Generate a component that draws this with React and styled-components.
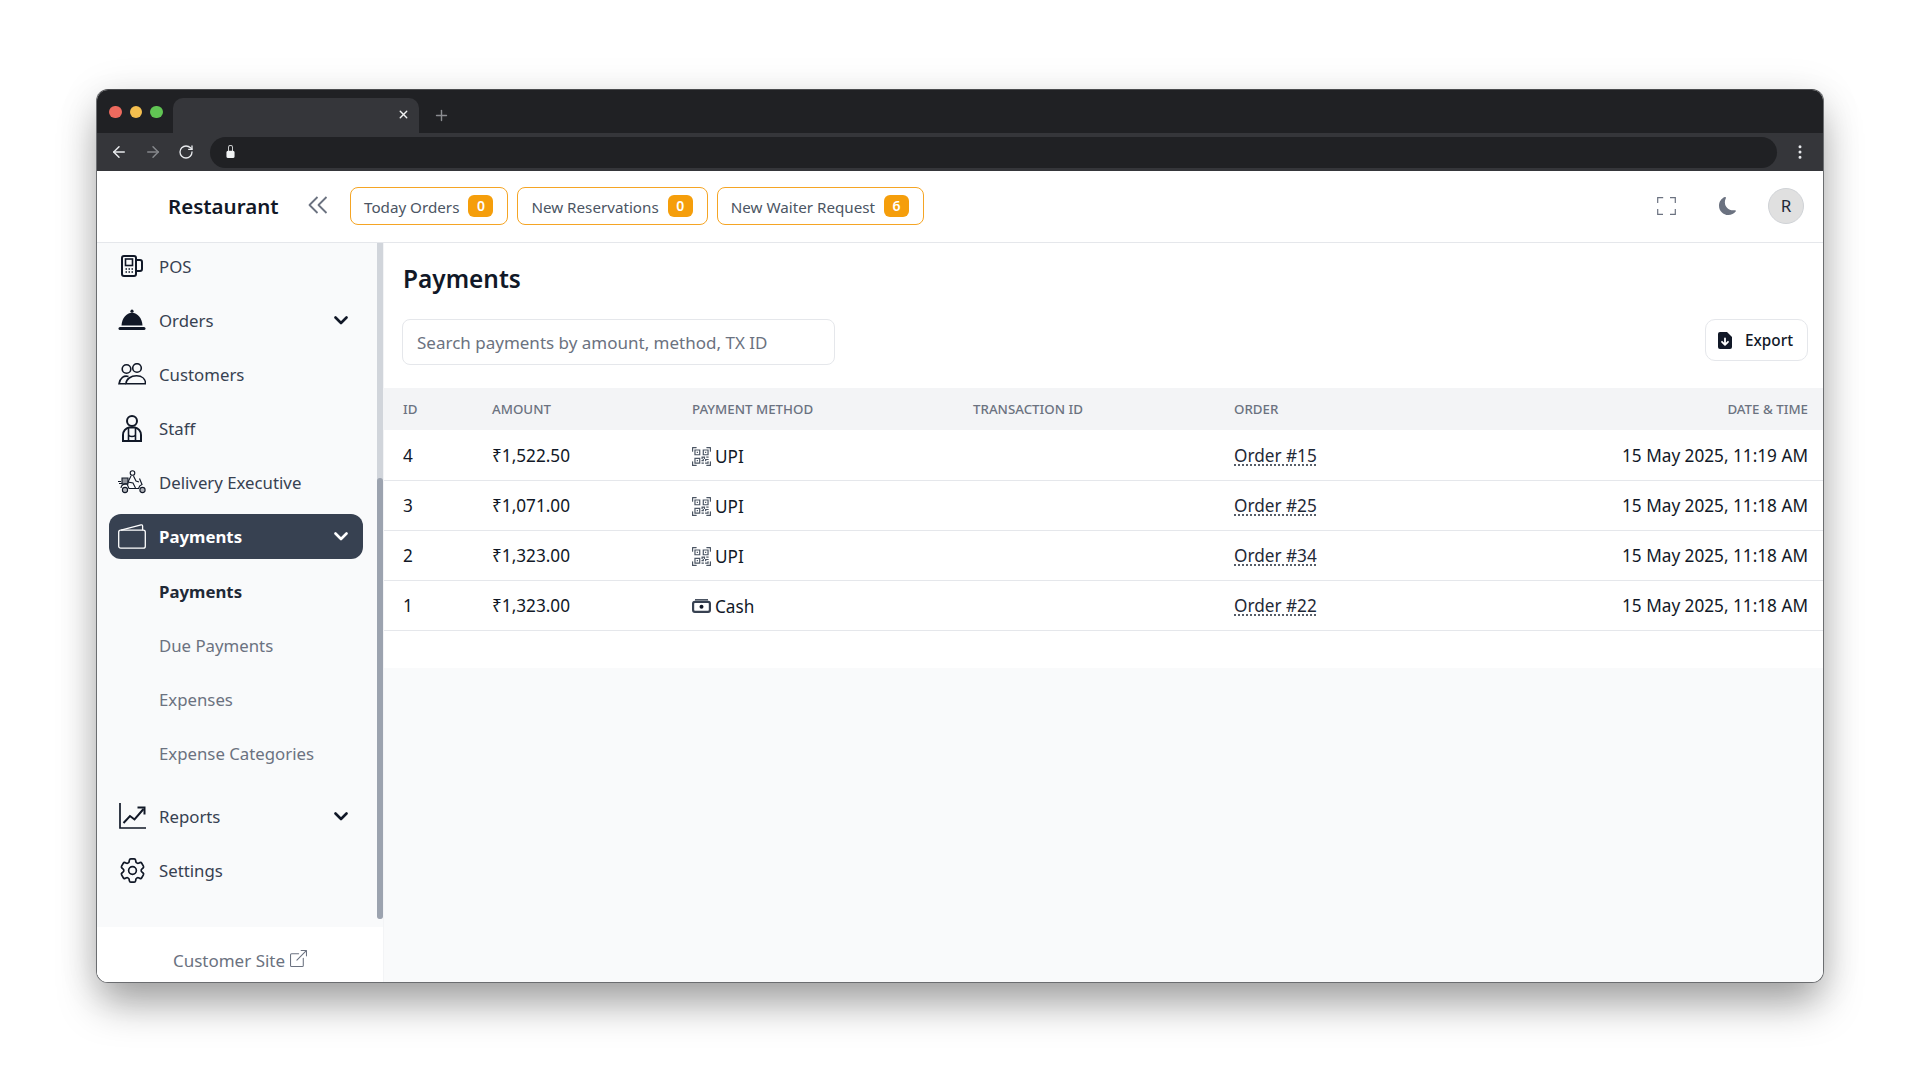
import styled, {createGlobalStyle} from "styled-components"
import {ArrowLeft, ArrowRight, RotateCw, X, Plus, EllipsisVertical} from "lucide-react"
import {BsQrCodeScan, BsMoonFill, BsBoxArrowUpRight, BsLockFill} from "react-icons/bs"
import {HiOutlineCog6Tooth} from "react-icons/hi2"

const FONT = `"Noto Sans", "Open Sans", sans-serif`

const GlobalStyle = createGlobalStyle`
  html, body {
    margin: 0;
    background: #fff;
  }
  body {
    font-family: ${FONT};
    color: #111827;
    overflow: hidden;
  }
  * {
    box-sizing: border-box;
  }
`

const PosIcon = () => (
  <svg width="22" height="22" viewBox="0 0 22 22" fill="none" stroke="currentColor" strokeWidth="2">
    <rect x="1" y="1" width="14" height="20" rx="2" />
    <rect x="4.500" y="4" width="7" height="6.500" strokeWidth="1.600" />
    <path d="M4.500 14h1.500M7.500 14H9M10.500 14H12M4.500 17H6M7.500 17H9M10.500 17H12" strokeWidth="1.600" />
    <path d="M15 5h4a2 2 0 0 1 2 2v7a2 2 0 0 1-2 2h-4" />
  </svg>
)

const BellIcon = () => (
  <svg width="28" height="22" viewBox="0 0 28 22" fill="currentColor">
    <circle cx="14" cy="2.200" r="1.600" />
    <path d="M3.500 16.500C3.800 9.500 8.500 3.800 14 3.800s10.200 5.700 10.500 12.700z" />
    <rect x="0.500" y="18" width="27" height="3" rx="1.500" />
  </svg>
)

const CustomersIcon = () => (
  <svg width="28" height="22" viewBox="0 0 28 22" fill="none" stroke="currentColor" strokeWidth="1.600">
    <circle cx="8.500" cy="6" r="4.300" />
    <circle cx="19" cy="5" r="4.300" />
    <path d="M10.500 13.500C6 12 2 15 1 20.800h6.800" />
    <path d="M8 20.800c0-4.800 5-8 10.500-8s9 3.200 9 8z" />
  </svg>
)

const StaffIcon = () => (
  <svg width="20" height="27" viewBox="0 0 20 27" fill="none" stroke="currentColor" strokeWidth="2">
    <circle cx="10" cy="6" r="5" />
    <path d="M1 26v-6c0-4 3-7 6-7.500h6c3 .5 6 3.500 6 7.500v6z" />
    <path d="M6.500 13v6.500c0 1.500 1 2 3.500 2s3.500-.5 3.500-2V13M6.500 20v6M13.500 20v6" strokeWidth="1.600" />
  </svg>
)

const DeliveryIcon = () => (
  <svg width="28" height="24" viewBox="0 0 28 24" fill="none" stroke="currentColor" strokeWidth="1.100">
    <circle cx="14.500" cy="3" r="2.300" />
    <path d="M13 6l-3 6 5 1 2.500 5M15.500 6l2.500 5 3 1" />
    <path d="M4 8h6v6H4z" fill="currentColor" fillOpacity=".45" />
    <path d="M1 13.500h3M0 11.500h3" />
    <path d="M3 18c0-3 3-4.500 6-4l2 4.500h9.500c.5-2 1.800-3.500 3.500-4l-2.500-6" />
    <circle cx="7" cy="20" r="2.600" fill="currentColor" fillOpacity=".3" />
    <circle cx="24.500" cy="20" r="2.600" fill="currentColor" fillOpacity=".3" />
  </svg>
)

const WalletIcon = () => (
  <svg width="28" height="25" viewBox="0 0 28 25" fill="none" stroke="currentColor" strokeWidth="1.300">
    <rect x="0.700" y="6.200" width="26.600" height="18" rx="2" />
    <path d="M3 6.200 23 .9c1-.2 1.600.3 1.600 1.300v4" />
  </svg>
)

const ChartIcon = () => (
  <svg width="27" height="26" viewBox="0 0 27 26" fill="none" stroke="currentColor" strokeWidth="1.700">
    <path d="M1 0v25h26" />
    <path d="M4.500 20 11 13l4.500 3.500L24.500 6" strokeWidth="2" />
    <path d="M18.500 4.500h7v7" strokeWidth="2" />
  </svg>
)

const CashIcon = () => (
  <svg width="19" height="14" viewBox="0 0 19 14" fill="none" stroke="#374151">
    <path d="M3 .8h13" strokeWidth="1.400" />
    <rect x="1.100" y="2.800" width="16.800" height="10" rx="1.800" strokeWidth="2.200" />
    <circle cx="9.500" cy="7.800" r="2" fill="#111827" strokeWidth="0" />
  </svg>
)

const FileDownIcon = () => (
  <svg width="14" height="17" viewBox="0 0 14 17">
    <path d="M2 0h7l5 5v10a2 2 0 0 1-2 2H2a2 2 0 0 1-2-2V2a2 2 0 0 1 2-2z" fill="#111827" />
    <path d="M7 6.500v6M4 9.800l3 3 3-3" fill="none" stroke="#fff" strokeWidth="1.800" strokeLinecap="round" strokeLinejoin="round" />
  </svg>
)

const FullscreenIcon = () => (
  <svg width="19" height="18" viewBox="0 0 19 18" fill="none" stroke="currentColor" strokeWidth="1.200">
    <path d="M.7 6V.7h5.500M13 .7h5.300V6M18.300 12v5.300H13M6 17.300H.7V12" />
  </svg>
)

const Chevron = () => (
  <svg width="14" height="9" viewBox="0 0 14 9" fill="none" stroke="currentColor" strokeWidth="2.600" strokeLinecap="round" strokeLinejoin="round">
    <path d="M1.500 1.500 7 7l5.500-5.500" />
  </svg>
)

const CollapseIcon = () => (
  <svg width="20" height="18" viewBox="0 0 20 18" fill="none" stroke="currentColor" strokeWidth="1.800" strokeLinejoin="round">
    <path d="M9.500 1 1.500 9l8 8M18.500 1l-8 8 8 8" />
  </svg>
)

const NAV_TOP = [
  {label: "POS", icon: <PosIcon />},
  {label: "Orders", icon: <BellIcon />, caret: true},
  {label: "Customers", icon: <CustomersIcon />},
  {label: "Staff", icon: <StaffIcon />},
  {label: "Delivery Executive", icon: <DeliveryIcon />},
]

const SUB_ITEMS = ["Payments", "Due Payments", "Expenses", "Expense Categories"]

const NAV_BOTTOM = [
  {label: "Reports", icon: <ChartIcon />, caret: true},
  {label: "Settings", icon: <HiOutlineCog6Tooth size={31} strokeWidth={1.3} />},
]

const STATS = [
  {label: "Today Orders", count: 0},
  {label: "New Reservations", count: 0},
  {label: "New Waiter Request", count: 6},
]

const PAYMENTS = [
  {id: 4, amount: "₹1,522.50", method: "UPI", order: "Order #15", date: "15 May 2025, 11:19 AM"},
  {id: 3, amount: "₹1,071.00", method: "UPI", order: "Order #25", date: "15 May 2025, 11:18 AM"},
  {id: 2, amount: "₹1,323.00", method: "UPI", order: "Order #34", date: "15 May 2025, 11:18 AM"},
  {id: 1, amount: "₹1,323.00", method: "Cash", order: "Order #22", date: "15 May 2025, 11:18 AM"},
]

function NavItem({item}) {
  return (
    <NavRow>
      <NavIcon>{item.icon}</NavIcon>
      <NavLabel>{item.label}</NavLabel>
      {item.caret && <Chevron />}
    </NavRow>
  )
}

function App() {
  return (
    <Page>
      <GlobalStyle />
      <BrowserWindow>
        <TabStrip>
          <Lights>
            <Light $color="#ed6a5e" />
            <Light $color="#f4bf4f" />
            <Light $color="#61c554" />
          </Lights>
          <Tab>
            <X size={13} strokeWidth={2.500} />
          </Tab>
          <NewTab>
            <Plus size={17} strokeWidth={2} />
          </NewTab>
        </TabStrip>
        <UrlBar>
          <UrlIcon><ArrowLeft size={18} /></UrlIcon>
          <UrlIcon $muted><ArrowRight size={18} /></UrlIcon>
          <UrlIcon><RotateCw size={16} /></UrlIcon>
          <Address>
            <BsLockFill size={13} />
          </Address>
          <Kebab>
            <EllipsisVertical size={18} />
          </Kebab>
        </UrlBar>

        <Header>
          <Brand>Restaurant</Brand>
          <CollapseButton>
            <CollapseIcon />
          </CollapseButton>
          <Stats>
            {STATS.map((s) => (
              <StatButton key={s.label}>
                <StatLabel>{s.label}</StatLabel>
                <Badge>{s.count}</Badge>
              </StatButton>
            ))}
          </Stats>
          <HeaderRight>
            <HeaderIcon $gap={43}>
              <FullscreenIcon />
            </HeaderIcon>
            <HeaderIcon $gap={31}>
              <BsMoonFill size={18} />
            </HeaderIcon>
            <Avatar>R</Avatar>
          </HeaderRight>
        </Header>

        <Body>
          <Sidebar>
            <SideScroll>
              <NavList>
                {NAV_TOP.map((item) => (
                  <NavItem key={item.label} item={item} />
                ))}
                <NavActive>
                  <NavIcon><WalletIcon /></NavIcon>
                  <NavLabel>Payments</NavLabel>
                  <Chevron />
                </NavActive>
                <SubList>
                  {SUB_ITEMS.map((label, i) => (
                    <SubItem key={label} $active={i === 0}>{label}</SubItem>
                  ))}
                </SubList>
                {NAV_BOTTOM.map((item) => (
                  <NavItem key={item.label} item={item} />
                ))}
              </NavList>
              <ScrollTrack>
                <ScrollThumb />
              </ScrollTrack>
            </SideScroll>
            <SideFooter>
              Customer Site
              <BsBoxArrowUpRight size={17} />
            </SideFooter>
          </Sidebar>

          <Main>
            <Top>
              <Title>Payments</Title>
              <Toolbar>
                <Search placeholder="Search payments by amount, method, TX ID" />
                <ExportButton>
                  <FileDownIcon />
                  Export
                </ExportButton>
              </Toolbar>
            </Top>
            <TableWrap>
              <Table>
                <thead>
                  <tr>
                    <Th $width={89}>ID</Th>
                    <Th $width={200}>Amount</Th>
                    <Th $width={281}>Payment Method</Th>
                    <Th $width={261}>Transaction ID</Th>
                    <Th>Order</Th>
                    <Th $right>Date &amp; Time</Th>
                  </tr>
                </thead>
                <tbody>
                  {PAYMENTS.map((p) => (
                    <tr key={p.id}>
                      <Td>{p.id}</Td>
                      <Td>{p.amount}</Td>
                      <Td>
                        <Method>
                          {p.method === "UPI" ? <BsQrCodeScan size={19} color="#4b5563" /> : <CashIcon />}
                          {p.method}
                        </Method>
                      </Td>
                      <Td />
                      <Td>
                        <OrderLink>{p.order}</OrderLink>
                      </Td>
                      <Td $right>{p.date}</Td>
                    </tr>
                  ))}
                </tbody>
              </Table>
            </TableWrap>
          </Main>
        </Body>
      </BrowserWindow>
    </Page>
  )
}

export default App

const Page = styled.div`
  width: 1920px;
  height: 1080px;
  padding: 89px 96px 0;
`

const BrowserWindow = styled.div`
  width: 1728px;
  height: 894px;
  display: flex;
  flex-direction: column;
  border: 1px solid #6b6d70;
  border-top-color: #4a4b4e;
  border-radius: 12px;
  overflow: hidden;
  background: #fff;
  box-shadow: 0 24px 40px -4px rgba(0, 0, 0, 0.34), 0 4px 40px rgba(0, 0, 0, 0.1);
`

const TabStrip = styled.div`
  height: 43px;
  flex: none;
  display: flex;
  align-items: flex-end;
  padding-left: 76px;
  background: #202124;
`

const Lights = styled.div`
  position: absolute;
  display: flex;
  gap: 8px;
  margin-left: -64px;
  margin-bottom: 15px;
`

const Light = styled.span`
  width: 12.500px;
  height: 12.500px;
  border-radius: 50%;
  background: ${(_) => _.$color};
`

const Tab = styled.div`
  width: 246px;
  height: 35px;
  display: flex;
  align-items: center;
  justify-content: flex-end;
  padding: 0 9px 2px 0;
  background: #35363a;
  border-radius: 10px 10px 0 0;
  color: #f1f3f4;
`

const NewTab = styled.div`
  display: flex;
  align-self: center;
  margin: 8px 0 0 14px;
  color: #8a8c90;
`

const UrlBar = styled.div`
  height: 38px;
  flex: none;
  display: flex;
  align-items: center;
  padding: 0 13px 1px;
  background: #35363a;
`

const UrlIcon = styled.span`
  width: 34px;
  display: flex;
  color: ${(_) => (_.$muted ? "#85878b" : "#e8eaed")};
`

const Address = styled.div`
  width: 1567px;
  height: 31px;
  flex: none;
  display: flex;
  align-items: center;
  margin: 1px 0 0 -2px;
  padding-left: 14px;
  border-radius: 16px;
  background: #202124;
  color: #f1f3f4;
  svg {
    margin-top: -1px;
  }
`

const Kebab = styled.span`
  display: flex;
  margin-left: 14px;
  color: #e8eaed;
`

const Header = styled.header`
  height: 72px;
  flex: none;
  display: flex;
  align-items: center;
  padding: 0 19px 2px 71px;
  background: #fff;
  border-bottom: 1px solid #e5e7eb;
`

const Brand = styled.div`
  width: 140px;
  font-size: 20.500px;
  font-weight: 600;
  color: #111827;
`

const CollapseButton = styled.span`
  display: flex;
  margin: 0 22px 2px 0;
  color: #6b7280;
`

const Stats = styled.div`
  display: flex;
  gap: 9px;
`

const StatButton = styled.div`
  height: 38px;
  display: flex;
  align-items: center;
  gap: 9px;
  padding: 0 14px 0 13px;
  border: 1px solid #f5a524;
  border-radius: 8px;
  font-size: 15.200px;
  color: #4b5563;
`

const StatLabel = styled.span`
  margin-top: 2px;
`

const Badge = styled.span`
  width: 25px;
  height: 22px;
  display: flex;
  align-items: center;
  justify-content: center;
  border-radius: 6px;
  background: #f59e0b;
  color: #fff;
  font-size: 14px;
  font-weight: 600;
`

const HeaderRight = styled.div`
  display: flex;
  align-items: center;
  margin-left: auto;
`

const HeaderIcon = styled.span`
  display: flex;
  margin-right: ${(_) => _.$gap}px;
  color: #6b7280;
`

const Avatar = styled.div`
  width: 36px;
  height: 36px;
  display: flex;
  align-items: center;
  justify-content: center;
  border: 1px solid #cfd2d6;
  border-radius: 50%;
  background: #e0e0e0;
  font-size: 17px;
  color: #1f2937;
`

const Body = styled.div`
  flex: 1;
  min-height: 0;
  display: flex;
`

const Sidebar = styled.aside`
  width: 287px;
  flex: none;
  display: flex;
  flex-direction: column;
  border-right: 1px solid #f3f4f6;
  background: #fff;
`

const SideScroll = styled.div`
  flex: 1;
  min-height: 0;
  display: flex;
  align-items: flex-start;
  justify-content: space-between;
  padding-left: 12px;
  background: #f9fafb;
`

const NavList = styled.nav`
  width: 254px;
  display: flex;
  flex-direction: column;
  gap: 9px;
  padding-top: 0.500px;
`

const NavRow = styled.div`
  height: 45px;
  display: flex;
  align-items: center;
  padding: 0 15px 0 9px;
  border-radius: 12px;
  color: #374151;
  svg {
    color: #111827;
    flex: none;
  }
`

const NavActive = styled(NavRow)`
  background: #374151;
  color: #fff;
  font-weight: 700;
  svg {
    color: #fff;
  }
`

const NavIcon = styled.span`
  width: 28px;
  flex: none;
  display: flex;
  justify-content: center;
  margin-right: 13px;
`

const NavLabel = styled.span`
  flex: 1;
  font-size: 16.800px;
`

const SubList = styled.div`
  display: flex;
  flex-direction: column;
  gap: 9px;
  margin: 1px 0 9px;
`

const SubItem = styled.div`
  height: 45px;
  display: flex;
  align-items: center;
  padding-left: 50px;
  font-size: 16.800px;
  font-weight: ${(_) => (_.$active ? 700 : 400)};
  color: ${(_) => (_.$active ? "#1f2937" : "#6b7280")};
`

const ScrollTrack = styled.div`
  width: 6px;
  height: 676px;
  flex: none;
  display: flex;
  align-items: flex-end;
  border-radius: 0 0 3px 3px;
  background: #d1d5db;
`

const ScrollThumb = styled.div`
  width: 100%;
  height: 441px;
  border-radius: 3px;
  background: #9ca3af;
`

const SideFooter = styled.div`
  height: 55px;
  flex: none;
  display: flex;
  align-items: flex-start;
  justify-content: center;
  gap: 5px;
  padding-top: 22px;
  font-size: 17px;
  line-height: 24px;
  color: #6b7280;
  background: #fff;
  svg {
    margin-top: 1px;
  }
`

const Main = styled.main`
  flex: 1;
  min-width: 0;
  display: flex;
  flex-direction: column;
  background: #f9fafb;
`

const Top = styled.div`
  padding: 15px 15px 23px 18px;
  background: #fff;
`

const Title = styled.h1`
  margin: 0 0 19px 1px;
  font-size: 24.400px;
  line-height: 42px;
  font-weight: 600;
  color: #111827;
`

const Toolbar = styled.div`
  display: flex;
  align-items: flex-start;
  justify-content: space-between;
`

const Search = styled.input`
  width: 433px;
  height: 46px;
  padding: 0 14px;
  border: 1px solid #e5e7eb;
  border-radius: 8px;
  outline: none;
  background: #fff;
  font-family: ${FONT};
  font-size: 17px;
  color: #111827;
  &::placeholder {
    color: #6b7280;
    opacity: 1;
  }
`

const ExportButton = styled.button`
  width: 103px;
  height: 42px;
  display: flex;
  align-items: center;
  justify-content: center;
  gap: 13px;
  padding: 0 2px 0 0;
  border: 1px solid #e5e7eb;
  border-radius: 10px;
  background: #fff;
  font-family: ${FONT};
  font-size: 15.300px;
  font-weight: 500;
  color: #111827;
`

const TableWrap = styled.div`
  padding-bottom: 37px;
  background: #fff;
`

const Table = styled.table`
  width: 100%;
  border-collapse: collapse;
  table-layout: fixed;
  tbody tr {
    height: 50px;
    border-bottom: 1px solid #e5e7eb;
  }
`

const Th = styled.th`
  width: ${(_) => (_.$width ? `${_.$width}px` : "auto")};
  height: 42px;
  padding: 0 ${(_) => (_.$right ? "15px" : "0")} 0 ${(_) => (_.$right ? "0" : "19px")};
  background: #f3f4f6;
  text-align: ${(_) => (_.$right ? "right" : "left")};
  text-transform: uppercase;
  font-size: 13.300px;
  font-weight: 500;
  color: #6b7280;
`

const Td = styled.td`
  padding: 1px ${(_) => (_.$right ? "15px" : "0")} 0 ${(_) => (_.$right ? "0" : "19px")};
  text-align: ${(_) => (_.$right ? "right" : "left")};
  font-size: 17.200px;
  color: #111827;
`

const Method = styled.span`
  display: inline-flex;
  align-items: center;
  gap: 4px;
  vertical-align: middle;
`

const OrderLink = styled.a`
  text-decoration: underline dotted;
  text-underline-offset: 3px;
  color: #1f2937;
`
